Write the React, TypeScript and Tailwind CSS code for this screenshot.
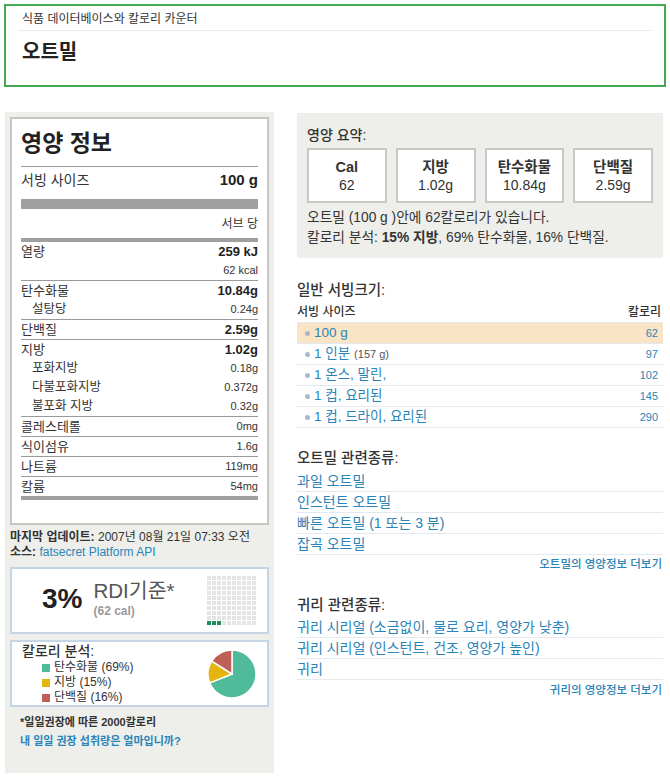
import React from "react";

const LINK = "text-[#2a84b8]";

function NRow({
  label,
  value,
  bold,
  indent,
}: {
  label?: string;
  value: string;
  bold?: boolean;
  indent?: boolean;
}) {
  return (
    <div className="flex h-[19px] items-center justify-between">
      <span className={indent ? "pl-[11px] text-[12.5px]" : "text-[13px]"}>{label}</span>
      <span className={bold ? "text-[13px] font-bold text-[#222]" : "text-[11px]"}>{value}</span>
    </div>
  );
}

function Sep() {
  return <div className="border-t border-[#9a9a9a]" />;
}

function Pie() {
  return (
    <svg width="48" height="48" viewBox="0 0 48 48" className="mr-[11px]">
      <path d="M24 24 L24 0 A24 24 0 1 1 1.68 32.83 Z" fill="#50bb9b" stroke="#fff" strokeWidth="1.5" />
      <path d="M24 24 L1.68 32.83 A24 24 0 0 1 3.74 11.14 Z" fill="#e4b40f" stroke="#fff" strokeWidth="1.5" />
      <path d="M24 24 L3.74 11.14 A24 24 0 0 1 24 0 Z" fill="#be5f58" stroke="#fff" strokeWidth="1.5" />
    </svg>
  );
}

function Grid() {
  const cells = Array.from({ length: 100 }, (_, i) => i);
  return (
    <div className="ml-auto mr-[11px] grid w-[49px] grid-cols-10 gap-[1px]">
      {cells.map((i) => (
        <div key={i} className={i >= 90 && i < 93 ? "h-[4px] w-[4px] bg-[#1f8a5c]" : "h-[4px] w-[4px] bg-[#e4e4e4]"} />
      ))}
    </div>
  );
}

function Serving({ name, extra, cal, hi }: { name: string; extra?: string; cal: string; hi?: boolean }) {
  return (
    <div className={hi ? "flex h-[21px] items-center justify-between border-t border-[#e3e9ef] bg-[#fae4c6]" : "flex h-[21px] items-center justify-between border-t border-[#e3e9ef]"}>
      <div className="flex items-center pl-[8px]">
        <span className="mr-[4px] inline-block h-[5px] w-[5px] rounded-full bg-[#a9b8cb]" />
        <span className={`text-[13.5px] ${LINK}`}>{name}</span>
        {extra && <span className="ml-[4px] text-[11px] text-[#555]">{extra}</span>}
      </div>
      <span className={`pr-[5px] text-[11px] font-medium ${LINK}`}>{cal}</span>
    </div>
  );
}

function LinkRow({ text }: { text: string }) {
  return (
    <div className={`flex h-[21px] items-center border-b border-[#e3e9ef] text-[14px] ${LINK}`}>{text}</div>
  );
}

export default function App() {
  return (
    <div className="min-h-[780px] w-[670px] bg-white pt-[4px] font-['Liberation_Sans','Noto_Sans_CJK_KR',sans-serif] text-[#333]">
      {/* header */}
      <div className="mx-[4px] h-[83px] border-2 border-[#45a851] px-[12px] pt-[5px]">
        <div className="border-b border-[#e6ebef] pb-[3px] pl-[4px] text-[12px] leading-[16px] text-[#333]">
          식품 데이터베이스와 칼로리 카운터
        </div>
        <div className="mt-[8px] pl-[4px] text-[20px] font-bold leading-[26px] text-[#222]">오트밀</div>
      </div>

      <div className="mt-[25px] flex">
        {/* left column */}
        <div className="ml-[5px] h-[661px] w-[269px] bg-[#eeefea] p-[5px]">
          <div className="h-[408px] border-2 border-[#c6c6c4] bg-white px-[9px] pt-[8px]">
            <div className="text-[23px] font-bold leading-[32px] text-[#222]">영양 정보</div>
            <div className="mt-[7px] border-t border-[#9a9a9a]" />
            <div className="flex h-[26px] items-center justify-between">
              <span className="text-[14px]">서빙 사이즈</span>
              <span className="text-[15px] font-bold text-[#222]">100 g</span>
            </div>
            <div className="mt-[6px] h-[10px] bg-[#a0a0a0]" />
            <div className="flex h-[29px] items-center justify-end text-[12px]">서브 당</div>
            <div className="h-[4px] bg-[#a0a0a0]" />
            <NRow label="열량" value="259 kJ" bold />
            <NRow value="62 kcal" />
            <Sep />
            <NRow label="탄수화물" value="10.84g" bold />
            <NRow label="설탕당" value="0.24g" indent />
            <Sep />
            <NRow label="단백질" value="2.59g" bold />
            <Sep />
            <NRow label="지방" value="1.02g" bold />
            <NRow label="포화지방" value="0.18g" indent />
            <NRow label="다불포화지방" value="0.372g" indent />
            <NRow label="불포화 지방" value="0.32g" indent />
            <Sep />
            <NRow label="콜레스테롤" value="0mg" />
            <Sep />
            <NRow label="식이섬유" value="1.6g" />
            <Sep />
            <NRow label="나트륨" value="119mg" />
            <Sep />
            <NRow label="칼륨" value="54mg" />
            <div className="h-[4px] bg-[#a0a0a0]" />
          </div>

          <div className="mt-[5px] text-[12px] leading-[15px]">
            <div>
              <span className="font-bold">마지막 업데이트:</span> 2007년 08월 21일 07:33 오전
            </div>
            <div>
              <span className="font-bold">소스:</span> <span className={LINK}>fatsecret Platform API</span>
            </div>
          </div>

          <div className="mt-[7px] flex h-[67px] items-center border-2 border-[#c6d5e5] bg-white">
            <div className="mb-[3px] ml-[30px] text-[28px] font-bold leading-none text-[#222]">3%</div>
            <div className="mb-[3px] ml-[11px] flex flex-col">
              <span className="text-[20.5px] leading-[22px] text-[#555]">RDI기준*</span>
              <span className="mt-[2px] text-[12px] font-bold leading-[14px] text-[#9a9a9a]">(62 cal)</span>
            </div>
            <Grid />
          </div>

          <div className="mt-[6px] flex h-[67px] items-center justify-between border-2 border-[#c6d5e5] bg-white">
            <div className="self-start pl-[10px]">
              <div className="text-[14px] font-medium leading-[18px] text-[#333]">칼로리 분석:</div>
              <div className="pl-[20px] text-[12px] leading-[15px]">
                <div className="flex items-center">
                  <span className="mr-[4px] inline-block h-[8px] w-[8px] bg-[#50bb9b]" />
                  탄수화물 (69%)
                </div>
                <div className="flex items-center">
                  <span className="mr-[4px] inline-block h-[8px] w-[8px] bg-[#e4b40f]" />
                  지방 (15%)
                </div>
                <div className="flex items-center">
                  <span className="mr-[4px] inline-block h-[8px] w-[8px] bg-[#be5f58]" />
                  단백질 (16%)
                </div>
              </div>
            </div>
            <Pie />
          </div>

          <div className="mt-[8px] pl-[10px] text-[11px] font-bold leading-[14px]">*일일권장에 따른 2000칼로리</div>
          <div className={`mt-[5px] pl-[10px] text-[11px] font-bold leading-[14px] ${LINK}`}>
            내 일일 권장 섭취량은 얼마입니까?
          </div>
        </div>

        {/* right column */}
        <div className="ml-[23px] mt-[1px] w-[366px]">
          <div className="h-[145px] bg-[#eeefea] px-[10px] pt-[13px]">
            <div className="text-[14px] font-medium leading-[18px] text-[#333]">영양 요약:</div>
            <div className="mt-[4px] flex gap-[9px]">
              {[
                ["Cal", "62"],
                ["지방", "1.02g"],
                ["탄수화물", "10.84g"],
                ["단백질", "2.59g"],
              ].map(([l, v]) => (
                <div key={l} className="flex h-[55px] w-[80px] flex-col items-center justify-center border-2 border-[#c8c8c8] bg-white">
                  <span className="text-[14.5px] font-bold leading-[18px] text-[#333]">{l}</span>
                  <span className="text-[14px] leading-[18px] text-[#333]">{v}</span>
                </div>
              ))}
            </div>
            <div className="mt-[5px] text-[13.75px] leading-[20px]">오트밀 (100 g )안에 62칼로리가 있습니다.</div>
            <div className="text-[13.75px] leading-[20px]">
              칼로리 분석: <span className="font-bold">15% 지방</span>, 69% 탄수화물, 16% 단백질.
            </div>
          </div>

          <div className="mt-[23px] text-[14.5px] font-medium leading-[18px]">일반 서빙크기:</div>
          <div className="mt-[3px] flex h-[20px] items-center justify-between text-[12px] font-medium">
            <span>서빙 사이즈</span>
            <span className="pr-[2px]">칼로리</span>
          </div>
          <div className="border-b border-[#e3e9ef]">
            <Serving name="100 g" cal="62" hi />
            <Serving name="1 인분" extra="(157 g)" cal="97" />
            <Serving name="1 온스, 말린," cal="102" />
            <Serving name="1 컵, 요리된" cal="145" />
            <Serving name="1 컵, 드라이, 요리된" cal="290" />
          </div>

          <div className="mt-[21px] text-[14.5px] font-medium leading-[18px]">오트밀 관련종류:</div>
          <div className="mt-[4px]">
            <LinkRow text="과일 오트밀" />
            <LinkRow text="인스턴트 오트밀" />
            <LinkRow text="빠른 오트밀 (1 또는 3 분)" />
            <LinkRow text="잡곡 오트밀" />
          </div>
          <div className={`flex h-[20px] items-center justify-end pr-[1px] text-[11.5px] font-medium ${LINK}`}>오트밀의 영양정보 더보기</div>

          <div className="mt-[21px] text-[14.5px] font-medium leading-[18px]">귀리 관련종류:</div>
          <div className="mt-[3px]">
            <LinkRow text="귀리 시리얼 (소금없이, 물로 요리, 영양가 낮춘)" />
            <LinkRow text="귀리 시리얼 (인스턴트, 건조, 영양가 높인)" />
            <LinkRow text="귀리" />
          </div>
          <div className={`flex h-[21px] items-center justify-end pr-[1px] text-[11.5px] font-medium ${LINK}`}>귀리의 영양정보 더보기</div>
        </div>
      </div>
    </div>
  );
}
